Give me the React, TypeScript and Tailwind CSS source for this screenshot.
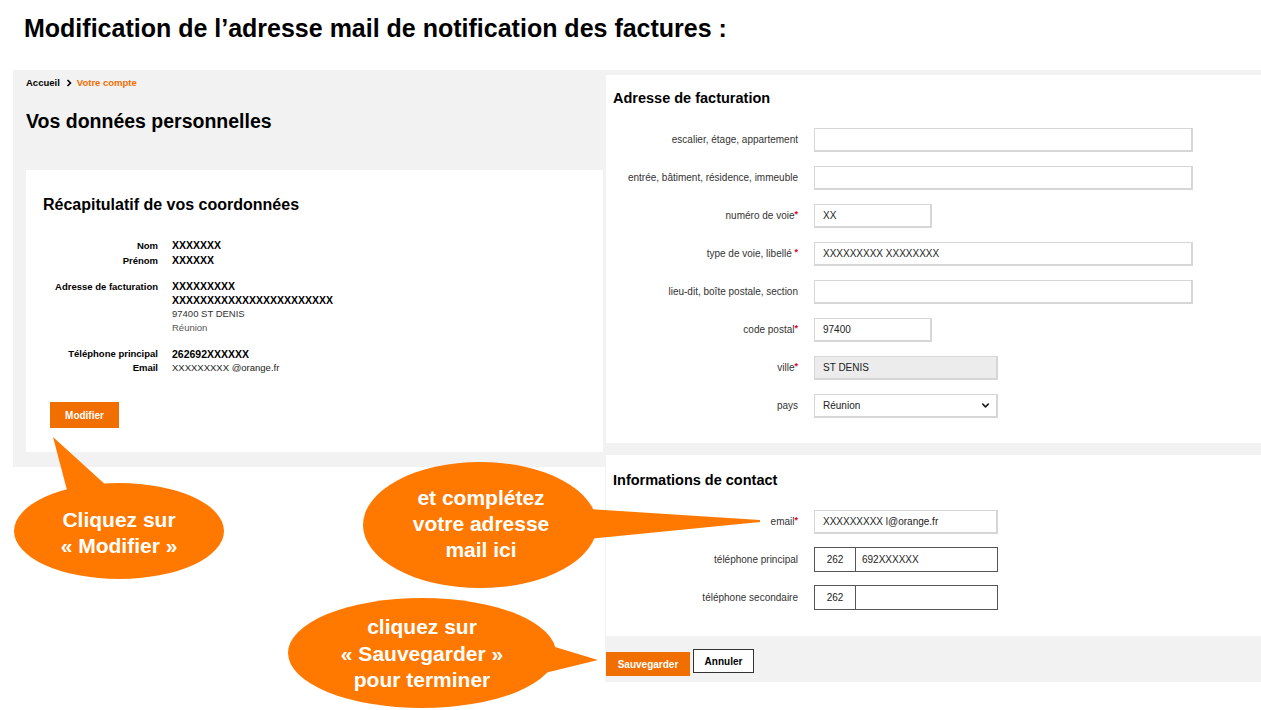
import { ChevronDown } from 'lucide-react'

const req = <span className="text-[#e3001b] text-[9px] font-bold leading-none align-top">*</span>

function Row({ label, star, children }: { label: string; star?: 'tight' | 'space'; children: React.ReactNode }) {
  return (
    <div className="flex items-center">
      <div className="w-[192px] text-right text-[10px] leading-[12px] text-[#333]">
        {label}
        {star === 'space' && ' '}
        {star && req}
      </div>
      <div className="ml-4">{children}</div>
    </div>
  )
}

function Field({ w, value = '', grey = false }: { w: string; value?: string; grey?: boolean }) {
  return (
    <div
      className={`${w} h-6 border border-[#d6d6d6] border-b-2 border-r-2 flex items-center pl-2 text-[10px] text-[#222] ${grey ? 'bg-[#ececec]' : 'bg-white'}`}
    >
      {value}
    </div>
  )
}

function Phone({ num }: { num: string }) {
  return (
    <div className="w-[184px] h-[25px] border border-[#555] flex text-[10px] text-[#222]">
      <div className="w-[41px] border-r border-[#555] flex items-center justify-center">262</div>
      <div className="flex items-center pl-[6px]">{num}</div>
    </div>
  )
}

export default function App() {
  return (
    <div className="relative w-[1261px] h-[710px] overflow-hidden bg-white text-black font-['Liberation_Sans',Arial,sans-serif]">
      <div className="h-[70px] pt-[13px] pl-6 text-[25px] leading-[30px] font-bold">
        Modification de l’adresse mail de notification des factures :
      </div>

      <div className="flex items-start pl-[13px]">
        {/* left screenshot */}
        <div className="w-[592px] h-[397px] bg-[#f2f2f2] pl-[13px] pt-[7px]">
          <div className="flex items-center h-3 text-[9.5px] font-bold">
            <span>Accueil</span>
            <svg width="6" height="8" viewBox="0 0 6 8" className="ml-[6px] mr-[5px]">
              <path d="M1.5 1 L4.5 4 L1.5 7" fill="none" stroke="#000" strokeWidth="1.6" />
            </svg>
            <span className="text-[#f16e00]">Votre compte</span>
          </div>
          <div className="mt-[20px] text-[19.5px] leading-6 font-bold">Vos données personnelles</div>

          <div className="mt-[37px] w-[577px] h-[282px] bg-white pl-[17px] pt-[25px]">
            <div className="text-[16px] leading-5 font-bold">Récapitulatif de vos coordonnées</div>

            <div className="mt-[23px] grid grid-cols-[115px_1fr] gap-x-[14px] leading-[15px]">
              <div className="text-right text-[9.5px] font-bold">Nom</div>
              <div className="text-[10.5px] font-bold">XXXXXXX</div>
              <div className="text-right text-[9.5px] font-bold">Prénom</div>
              <div className="text-[10.5px] font-bold">XXXXXX</div>
            </div>

            <div className="mt-[12px] grid grid-cols-[115px_1fr] gap-x-[14px] leading-[13.5px]">
              <div className="text-right text-[9.5px] font-bold">Adresse de facturation</div>
              <div>
                <div className="text-[10.5px] font-bold">XXXXXXXXX</div>
                <div className="text-[10.5px] font-bold">XXXXXXXXXXXXXXXXXXXXXXX</div>
                <div className="text-[9.5px] text-[#333]">97400 ST DENIS</div>
                <div className="text-[9.5px] text-[#555]">Réunion</div>
              </div>
            </div>

            <div className="mt-[13px] grid grid-cols-[115px_1fr] gap-x-[14px] leading-[14px]">
              <div className="text-right text-[9.5px] font-bold">Téléphone principal</div>
              <div className="text-[10.5px] font-bold">262692XXXXXX</div>
              <div className="text-right text-[9.5px] font-bold">Email</div>
              <div className="text-[9.5px] text-[#222]">XXXXXXXXX @orange.fr</div>
            </div>

            <button className="mt-[27px] ml-[7px] w-[69px] h-[26px] bg-[#f16e00] text-white text-[10px] font-bold">
              Modifier
            </button>
          </div>
        </div>

        {/* right screenshot */}
        <div className="w-[656px] h-[612px] bg-[#f2f2f2] pt-[5px] pl-px">
          <div className="h-[368px] bg-white pt-[14px]">
            <div className="pl-[7px] text-[14.5px] leading-[18px] font-bold">Adresse de facturation</div>
            <div className="mt-[21px] flex flex-col gap-[14px]">
              <Row label="escalier, étage, appartement"><Field w="w-[379px]" /></Row>
              <Row label="entrée, bâtiment, résidence, immeuble"><Field w="w-[379px]" /></Row>
              <Row label="numéro de voie" star="tight"><Field w="w-[118px]" value="XX" /></Row>
              <Row label="type de voie, libellé" star="space"><Field w="w-[379px]" value="XXXXXXXXX XXXXXXXX" /></Row>
              <Row label="lieu-dit, boîte postale, section"><Field w="w-[379px]" /></Row>
              <Row label="code postal" star="tight"><Field w="w-[118px]" value="97400" /></Row>
              <Row label="ville" star="tight"><Field w="w-[184px]" value="ST DENIS" grey /></Row>
              <Row label="pays">
                <div className="w-[184px] h-6 border border-[#d6d6d6] border-b-2 border-r-2 bg-white flex items-center justify-between pl-2 pr-[5px] text-[10px] text-[#222]">
                  Réunion
                  <ChevronDown size={11} strokeWidth={3.5} color="#222" />
                </div>
              </Row>
            </div>
          </div>

          <div className="mt-3 h-[181px] bg-white pt-4">
            <div className="pl-[7px] text-[14.5px] leading-[18px] font-bold">Informations de contact</div>
            <div className="mt-[21px] flex flex-col gap-[13px]">
              <Row label="email" star="tight"><Field w="w-[184px]" value="XXXXXXXXX l@orange.fr" /></Row>
              <Row label="téléphone principal"><Phone num="692XXXXXX" /></Row>
              <Row label="téléphone secondaire"><Phone num="" /></Row>
            </div>
          </div>

          <div className="flex items-start gap-[3px]">
            <button className="mt-4 w-[84px] h-6 bg-[#f16e00] text-white text-[10px] font-bold">Sauvegarder</button>
            <button className="mt-[13px] w-[61px] h-6 bg-white border border-[#333] text-[10px] font-bold">Annuler</button>
          </div>
        </div>
      </div>

      {/* callouts */}
      <svg className="absolute inset-0 pointer-events-none" width="1261" height="710" viewBox="0 0 1261 710">
        <g fill="#ff7900">
          <polygon points="53,437 68,494 108,487" />
          <ellipse cx="119" cy="531" rx="105" ry="48" />
          <polygon points="588,509 760,520 760,522 588,539" />
          <ellipse cx="480" cy="525" rx="117" ry="63" />
          <polygon points="545,644 598,660 545,673" />
          <ellipse cx="422" cy="653" rx="134" ry="55" />
        </g>
        <g fill="#fff" fontFamily="'Liberation Sans', Arial, sans-serif" fontWeight="bold" fontSize="21" textAnchor="middle">
          <text x="119" y="527">Cliquez sur</text>
          <text x="119" y="553">« Modifier »</text>
          <text x="481" y="505">et complétez</text>
          <text x="481" y="531">votre adresse</text>
          <text x="481" y="557">mail ici</text>
          <text x="422" y="634">cliquez sur</text>
          <text x="422" y="661">« Sauvegarder »</text>
          <text x="422" y="687">pour terminer</text>
        </g>
      </svg>
    </div>
  )
}
